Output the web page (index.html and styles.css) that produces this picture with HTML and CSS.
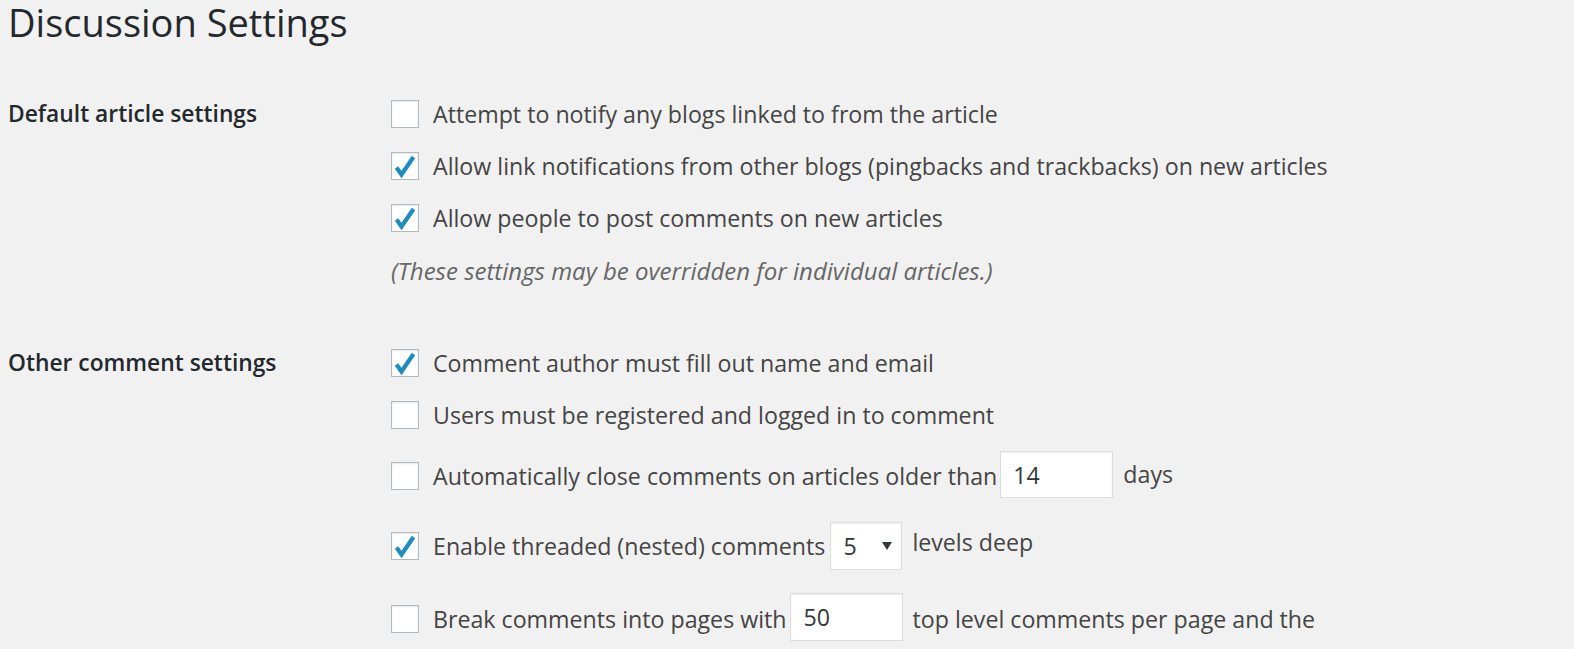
FILE: index.html
```html
<!DOCTYPE html>
<html lang="en">
<head>
<meta charset="utf-8">
<title>Discussion Settings</title>
<link rel="stylesheet" href="styles.css">
</head>
<body>
<div class="wrap">
  <h1 class="title">Discussion Settings</h1>

  <div class="section section-default">
    <div class="label">Default article settings</div>
    <div class="fields">
      <div class="opt"><span class="cb"></span><span class="txt">Attempt to notify any blogs linked to from the article</span></div>
      <div class="opt"><span class="cb checked"><svg viewBox="0 0 28 28"><path d="M5.5 15.5 L10.5 22.5 L22.5 5"/></svg></span><span class="txt">Allow link notifications from other blogs (pingbacks and trackbacks) on new articles</span></div>
      <div class="opt"><span class="cb checked"><svg viewBox="0 0 28 28"><path d="M5.5 15.5 L10.5 22.5 L22.5 5"/></svg></span><span class="txt">Allow people to post comments on new articles</span></div>
      <p class="description">(These settings may be overridden for individual articles.)</p>
    </div>
  </div>

  <div class="section section-other">
    <div class="label">Other comment settings</div>
    <div class="fields">
      <div class="opt"><span class="cb checked"><svg viewBox="0 0 28 28"><path d="M5.5 15.5 L10.5 22.5 L22.5 5"/></svg></span><span class="txt">Comment author must fill out name and email</span></div>
      <div class="opt"><span class="cb"></span><span class="txt">Users must be registered and logged in to comment</span></div>
      <div class="opt opt-close"><span class="cb"></span><span class="txt">Automatically close comments on articles older than</span><span class="input input-days">14</span><span class="txt after-days">days</span></div>
      <div class="opt opt-thread"><span class="cb checked"><svg viewBox="0 0 28 28"><path d="M5.5 15.5 L10.5 22.5 L22.5 5"/></svg></span><span class="txt">Enable threaded (nested) comments</span><span class="select"><span class="sel-val">5</span><span class="sel-arrow"></span></span><span class="txt after-select">levels deep</span></div>
      <div class="opt opt-pages"><span class="cb"></span><span class="txt">Break comments into pages with</span><span class="input input-pages">50</span><span class="txt after-pages">top level comments per page and the</span></div>
    </div>
  </div>
</div>
</body>
</html>
```

FILE: styles.css
```css
* { box-sizing: border-box; }
html, body { margin: 0; padding: 0; }
body {
  background: #f1f1f1;
  color: #444;
  font-family: "Open Sans", "Noto Sans", sans-serif;
  font-size: 23.2px;
  overflow: hidden;
  height: 649px;
}
.wrap { padding: 0 0 0 8px; }
.title {
  margin: 0;
  padding-top: 2px;
  font-size: 38px;
  font-weight: 400;
  line-height: 40px;
  color: #23282d;
  height: 88px;
}
.section { display: flex; }
.label {
  width: 383px;
  flex: none;
  font-weight: 600;
  color: #23282d;
  line-height: 52px;
  height: 52px;
  font-size: 22.8px;
}
.fields { flex: 1; display: flex; flex-direction: column; }
.opt {
  display: flex;
  align-items: center;
  min-height: 52px;
  white-space: nowrap;
}
.cb {
  width: 28px;
  height: 28px;
  flex: none;
  background: #fff;
  border: 1px solid #b4b9be;
  box-shadow: inset 0 1px 2px rgba(0,0,0,.1);
  margin-right: 14px;
  position: relative;
}
.cb svg {
  position: absolute;
  left: -1px;
  top: -1px;
  width: 28px;
  height: 28px;
  fill: none;
  stroke: #1e8cbe;
  stroke-width: 4.2;
  stroke-linejoin: miter;
}
.description {
  margin: 0;
  height: 54px;
  line-height: 54px;
  font-style: italic;
  color: #666;
  font-size: 24px;
}
.section-other { margin-top: 39px; }
.opt-close { min-height: 70px; }
.opt-thread { min-height: 70px; }
.opt-pages { min-height: 76px; }
.input, .select {
  background: #fff;
  border: 1px solid #ddd;
  box-shadow: inset 0 1px 2px rgba(0,0,0,.07);
  height: 48px;
  display: flex;
  align-items: center;
  color: #32373c;
  flex: none;
}
.input-days { width: 113px; height: 47px; margin-left: 3px; padding-left: 12px; margin-top: -3px; }
.after-days { margin-left: 10px; margin-top: -4px; }
.input-pages { width: 113px; margin-left: 3px; padding-left: 13px; margin-top: -4px; }
.after-pages { margin-left: 10px; }
.select { width: 72px; margin-left: 5px; padding: 0 0 0 12px; position: relative; }
.sel-arrow {
  position: absolute;
  left: 51px;
  top: 19px;
  width: 0;
  height: 0;
  border-left: 5px solid transparent;
  border-right: 5px solid transparent;
  border-top: 8px solid #32373c;
}
.after-select { margin-left: 10px; margin-top: -8px; }
```
